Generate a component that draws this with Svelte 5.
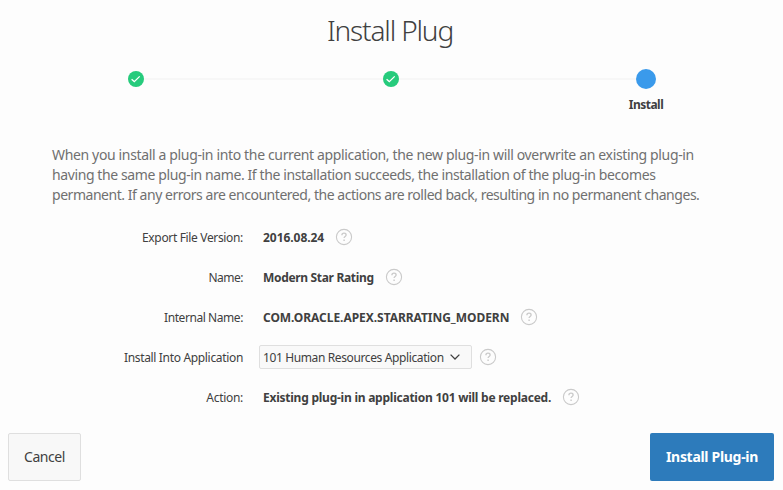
<script>
  const fields = [
    { label: 'Export File Version:', value: '2016.08.24', tracking: -0.34, valueTracking: -0.05 },
    { label: 'Name:', value: 'Modern Star Rating', tracking: -0.5, valueTracking: -0.33 },
    { label: 'Internal Name:', value: 'COM.ORACLE.APEX.STARRATING_MODERN', tracking: -0.43, valueTracking: -0.05 },
    { label: 'Install Into Application', value: '101 Human Resources Application', tracking: -0.33, valueTracking: -0.38, select: true },
    { label: 'Action:', value: 'Existing plug-in in application 101 will be replaced.', tracking: -0.3, valueTracking: -0.24 }
  ];
</script>

<main>
  <h1>Install Plug</h1>

  <div class="steps">
    {#each [1, 2] as step}
      <span class="done">
        <svg width="16" height="16" viewBox="0 0 16 16"><path d="M3.6 8.2 6.3 10.6 11.7 5.4" fill="none" stroke="#fff" stroke-width="1.3" /></svg>
      </span>
      <span class="line"></span>
    {/each}
    <span class="current"><b>Install</b></span>
  </div>

  <p>
    <span class="l1">When you install a plug-in into the current application, the new plug-in will overwrite an existing plug-in</span><br />
    <span class="l2">having the same plug-in name. If the installation succeeds, the installation of the plug-in becomes</span><br />
    <span class="l3">permanent. If any errors are encountered, the actions are rolled back, resulting in no permanent changes.</span>
  </p>

  <div class="form">
    {#each fields as field}
      <div class="row">
        <span class="label" style:letter-spacing="{field.tracking}px">{field.label}</span>
        {#if field.select}
          <button class="select">
            <span style:letter-spacing="{field.valueTracking}px">{field.value}</span>
            <svg width="10" height="6" viewBox="0 0 10 6"><path d="M.6.6 5 5 9.4.6" fill="none" stroke="#404040" stroke-width="1.3" /></svg>
          </button>
        {:else}
          <strong style:letter-spacing="{field.valueTracking}px">{field.value}</strong>
        {/if}
        <svg class="help" width="18" height="18" viewBox="0 0 18 18" fill="none" stroke="#cacaca">
          <circle cx="9" cy="9" r="7.6" stroke-width="1.1" />
          <path d="M6.9 7.2C6.9 5.9 7.8 5.2 9 5.2s2.1.7 2.1 1.8c0 1.4-2 1.5-2 3.1" stroke-width="1.3" />
          <path d="M9.1 11.6v1.4" stroke-width="1.4" />
        </svg>
      </div>
    {/each}
  </div>

  <footer>
    <button class="cancel">Cancel</button>
    <button class="primary">Install Plug-in</button>
  </footer>
</main>

<style>
  :global(body) { background: #fdfdfd; }
  main {
    box-sizing: border-box;
    width: 783px;
    height: 490px;
    display: flex;
    flex-direction: column;
    overflow: hidden;
    font: 12px/16px "Noto Sans", "Open Sans", sans-serif;
    color: #404040;
    white-space: nowrap;
  }
  h1 {
    margin: 12px 0 0;
    padding-right: 3px;
    font-size: 28px;
    line-height: 36px;
    font-weight: 300;
    text-align: center;
    letter-spacing: -1.15px;
  }
  .steps {
    display: flex;
    align-items: center;
    height: 20px;
    margin: 21px 127px 0 128px;
  }
  .done { width: 16px; height: 16px; border-radius: 50%; background: #26cb7c; }
  .done svg { display: block; }
  .line { flex: 239; height: 2px; background: #f7f7f7; }
  .line ~ .line { flex-grow: 237; }
  .current {
    display: flex;
    justify-content: center;
    width: 20px;
    height: 20px;
    border-radius: 50%;
    background: #3a9aeb;
  }
  .current b { margin-top: 28px; font-size: 12px; letter-spacing: -0.5px; }
  p {
    margin: 56px 0 0 52px;
    font-size: 14px;
    line-height: 20px;
    color: #707070;
  }
  .l1 { letter-spacing: -0.35px; }
  .l2 { letter-spacing: -0.395px; }
  .l3 { letter-spacing: -0.465px; }
  .form { margin-top: 12px; }
  .row { display: flex; align-items: center; height: 40px; }
  .label { width: 243px; padding-top: 2px; text-align: right; }
  strong { margin-left: 20px; padding-top: 2px; }
  .help { margin-left: 11px; }
  button { box-sizing: border-box; font: inherit; color: inherit; border-radius: 2px; padding: 0; }
  .select {
    display: flex;
    align-items: center;
    justify-content: space-between;
    width: 213px;
    height: 24px;
    margin-left: 16px;
    padding: 0 11px 0 3px;
    background: #f9f9f9;
    border: 1px solid #dfdfdf;
  }
  .select span { padding-top: 2px; }
  .select + .help { margin-left: 7px; }
  footer { display: flex; justify-content: space-between; margin: 16px 9px 0 8px; }
  .cancel, .primary { height: 48px; font-size: 14px; letter-spacing: -0.45px; }
  .cancel { width: 73px; background: #f8f8f8; border: 1px solid #dfdfdf; }
  .primary { width: 124px; background: #2d7bbb; color: #fff; border: 0; font-weight: 700; letter-spacing: -0.3px; }
</style>
